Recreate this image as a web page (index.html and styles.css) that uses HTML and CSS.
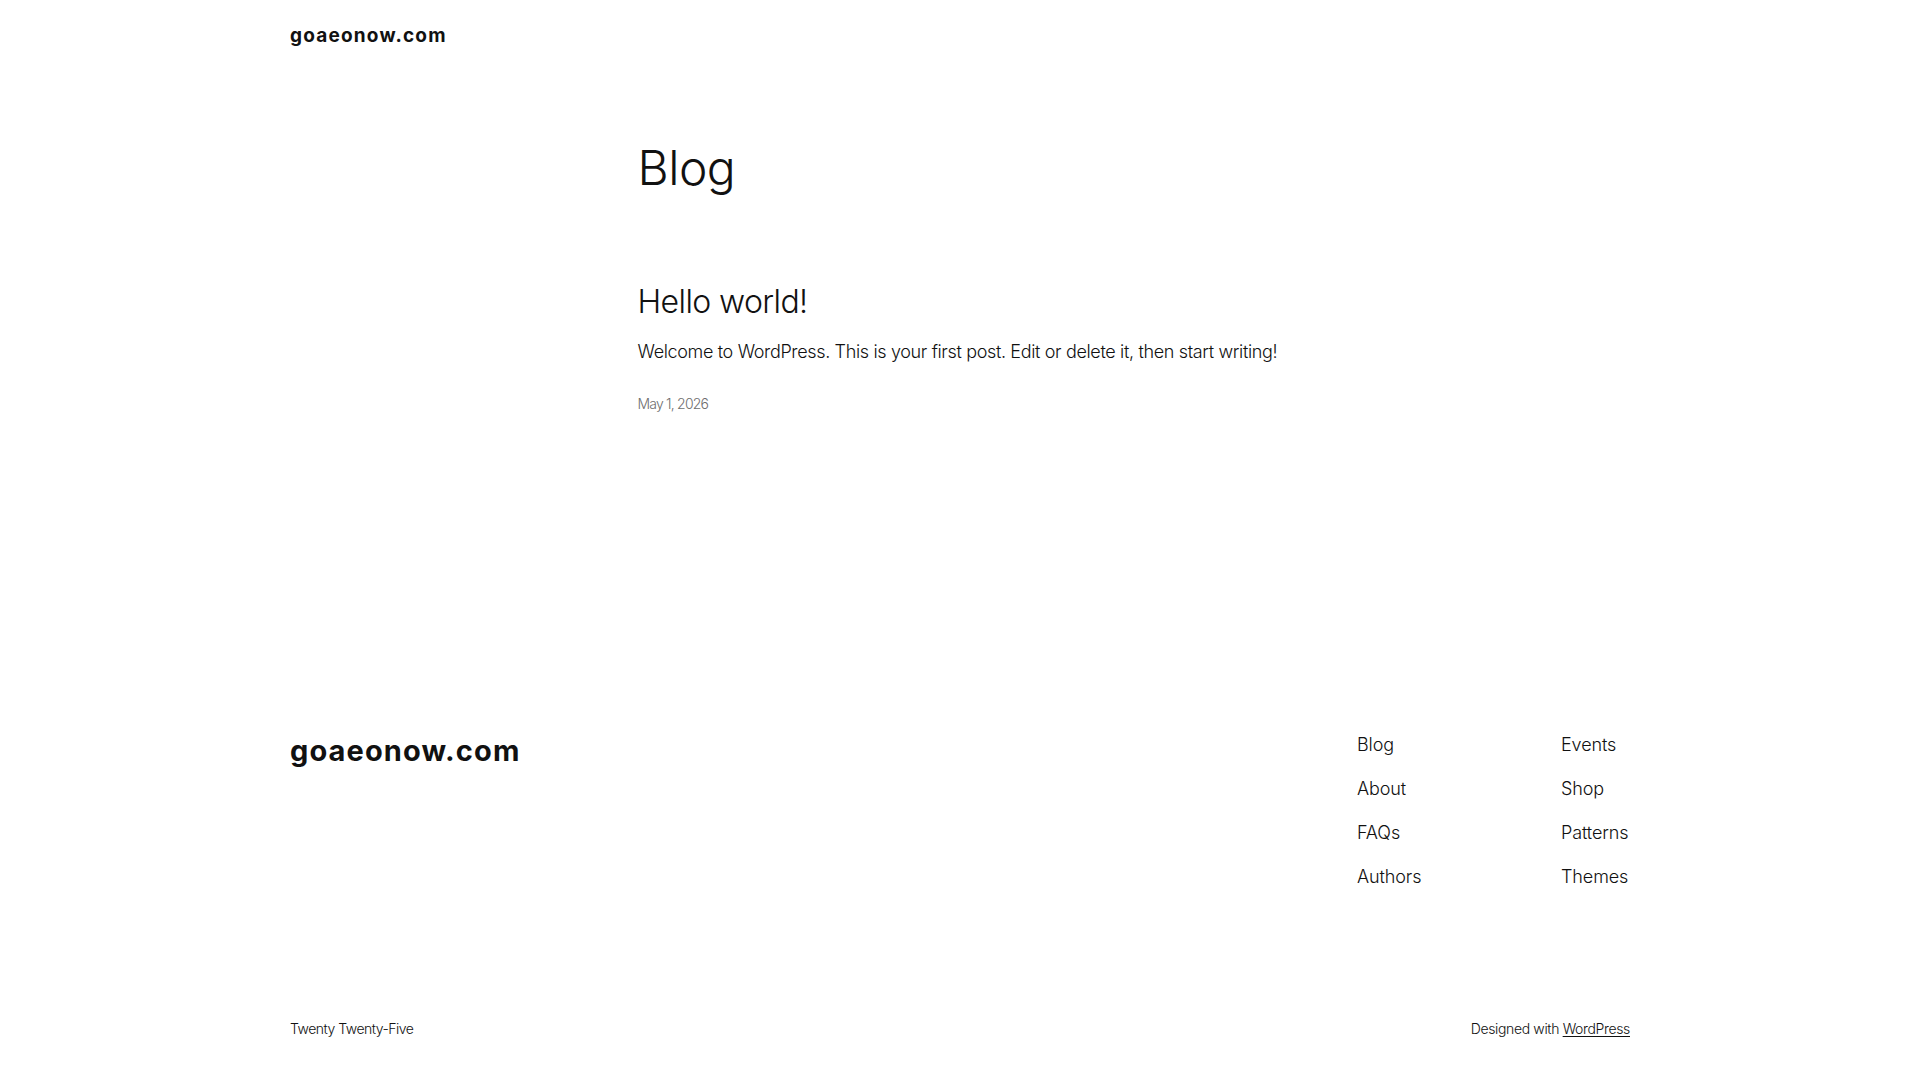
FILE: index.html
```html
<!DOCTYPE html>
<html lang="en">
<head>
<meta charset="utf-8">
<title>Blog – goaeonow.com</title>
<link rel="stylesheet" href="styles.css">
</head>
<body>
<header class="site-header">
  <a class="site-title" href="#">goaeonow.com</a>
</header>
<main class="site-main">
  <h1 class="page-title">Blog</h1>
  <article class="post">
    <h2 class="post-title"><a href="#">Hello world!</a></h2>
    <p class="post-excerpt">Welcome to WordPress. This is your first post. Edit or delete it, then start writing!</p>
    <time class="post-date">May 1, 2026</time>
  </article>
</main>
<footer class="site-footer">
  <div class="footer-top">
    <a class="footer-title" href="#">goaeonow.com</a>
    <nav class="footer-nav">
      <ul class="nav-col">
        <li><a href="#">Blog</a></li>
        <li><a href="#">About</a></li>
        <li><a href="#">FAQs</a></li>
        <li><a href="#">Authors</a></li>
      </ul>
      <ul class="nav-col">
        <li><a href="#">Events</a></li>
        <li><a href="#">Shop</a></li>
        <li><a href="#">Patterns</a></li>
        <li><a href="#">Themes</a></li>
      </ul>
    </nav>
  </div>
  <div class="footer-bottom">
    <span class="credit credit-left">Twenty Twenty-Five</span>
    <span class="credit credit-right">Designed with <a class="credit-link" href="#">WordPress</a></span>
  </div>
</footer>
</body>
</html>
```
FILE: styles.css
```css
html, body {
  margin: 0;
  padding: 0;
  background: #ffffff;
}
body {
  font-family: Inter, "Liberation Sans", sans-serif;
  color: #111111;
  font-weight: 300;
  font-size: 18px;
  line-height: 1.5;
}
a {
  color: inherit;
  text-decoration: none;
}
.site-header {
  padding: 23px 290px 0;
  height: 25.2px;
}
.site-title {
  display: block;
  font-size: 19px;
  line-height: 25.2px;
  font-weight: 700;
  letter-spacing: 1.2px;
}
.site-main {
  width: 645px;
  margin: 0 auto;
  padding-top: 90.5px;
}
.page-title {
  margin: 0;
  font-size: 48px;
  line-height: 57.6px;
  font-weight: 300;
  letter-spacing: -0.5px;
}
.post {
  padding-top: 86.7px;
}
.post-title {
  margin: 0;
  font-size: 32px;
  line-height: 38.4px;
  font-weight: 300;
  letter-spacing: -0.6px;
}
.post-excerpt {
  margin: 16.3px 0 0;
  font-size: 18px;
  line-height: 27px;
  letter-spacing: -0.35px;
  white-space: nowrap;
}
.post-date {
  display: block;
  margin-top: 28.7px;
  font-size: 14px;
  line-height: 21px;
  letter-spacing: -0.8px;
  color: #6e6e6e;
}
.site-footer {
  padding: 316.6px 290px 0;
}
.footer-top {
  display: flex;
  justify-content: space-between;
  align-items: flex-start;
}
.footer-title {
  margin-top: 3px;
  font-size: 29px;
  line-height: 33.6px;
  font-weight: 700;
  letter-spacing: 1.1px;
}
.footer-nav {
  display: grid;
  grid-template-columns: 204px 69px;
}
.nav-col {
  list-style: none;
  margin: 0;
  padding: 0;
  display: flex;
  flex-direction: column;
  gap: 17px;
}
.nav-col li {
  font-size: 18px;
  line-height: 27px;
  white-space: nowrap;
  letter-spacing: -0.1px;
}
.footer-bottom {
  display: flex;
  justify-content: space-between;
  margin-top: 127.7px;
}
.credit {
  font-size: 14px;
  line-height: 21px;
}
.credit-left {
  letter-spacing: -0.5px;
}
.credit-right {
  letter-spacing: -0.35px;
}
.credit-link {
  text-decoration: underline;
  text-underline-offset: 2px;
}
```
